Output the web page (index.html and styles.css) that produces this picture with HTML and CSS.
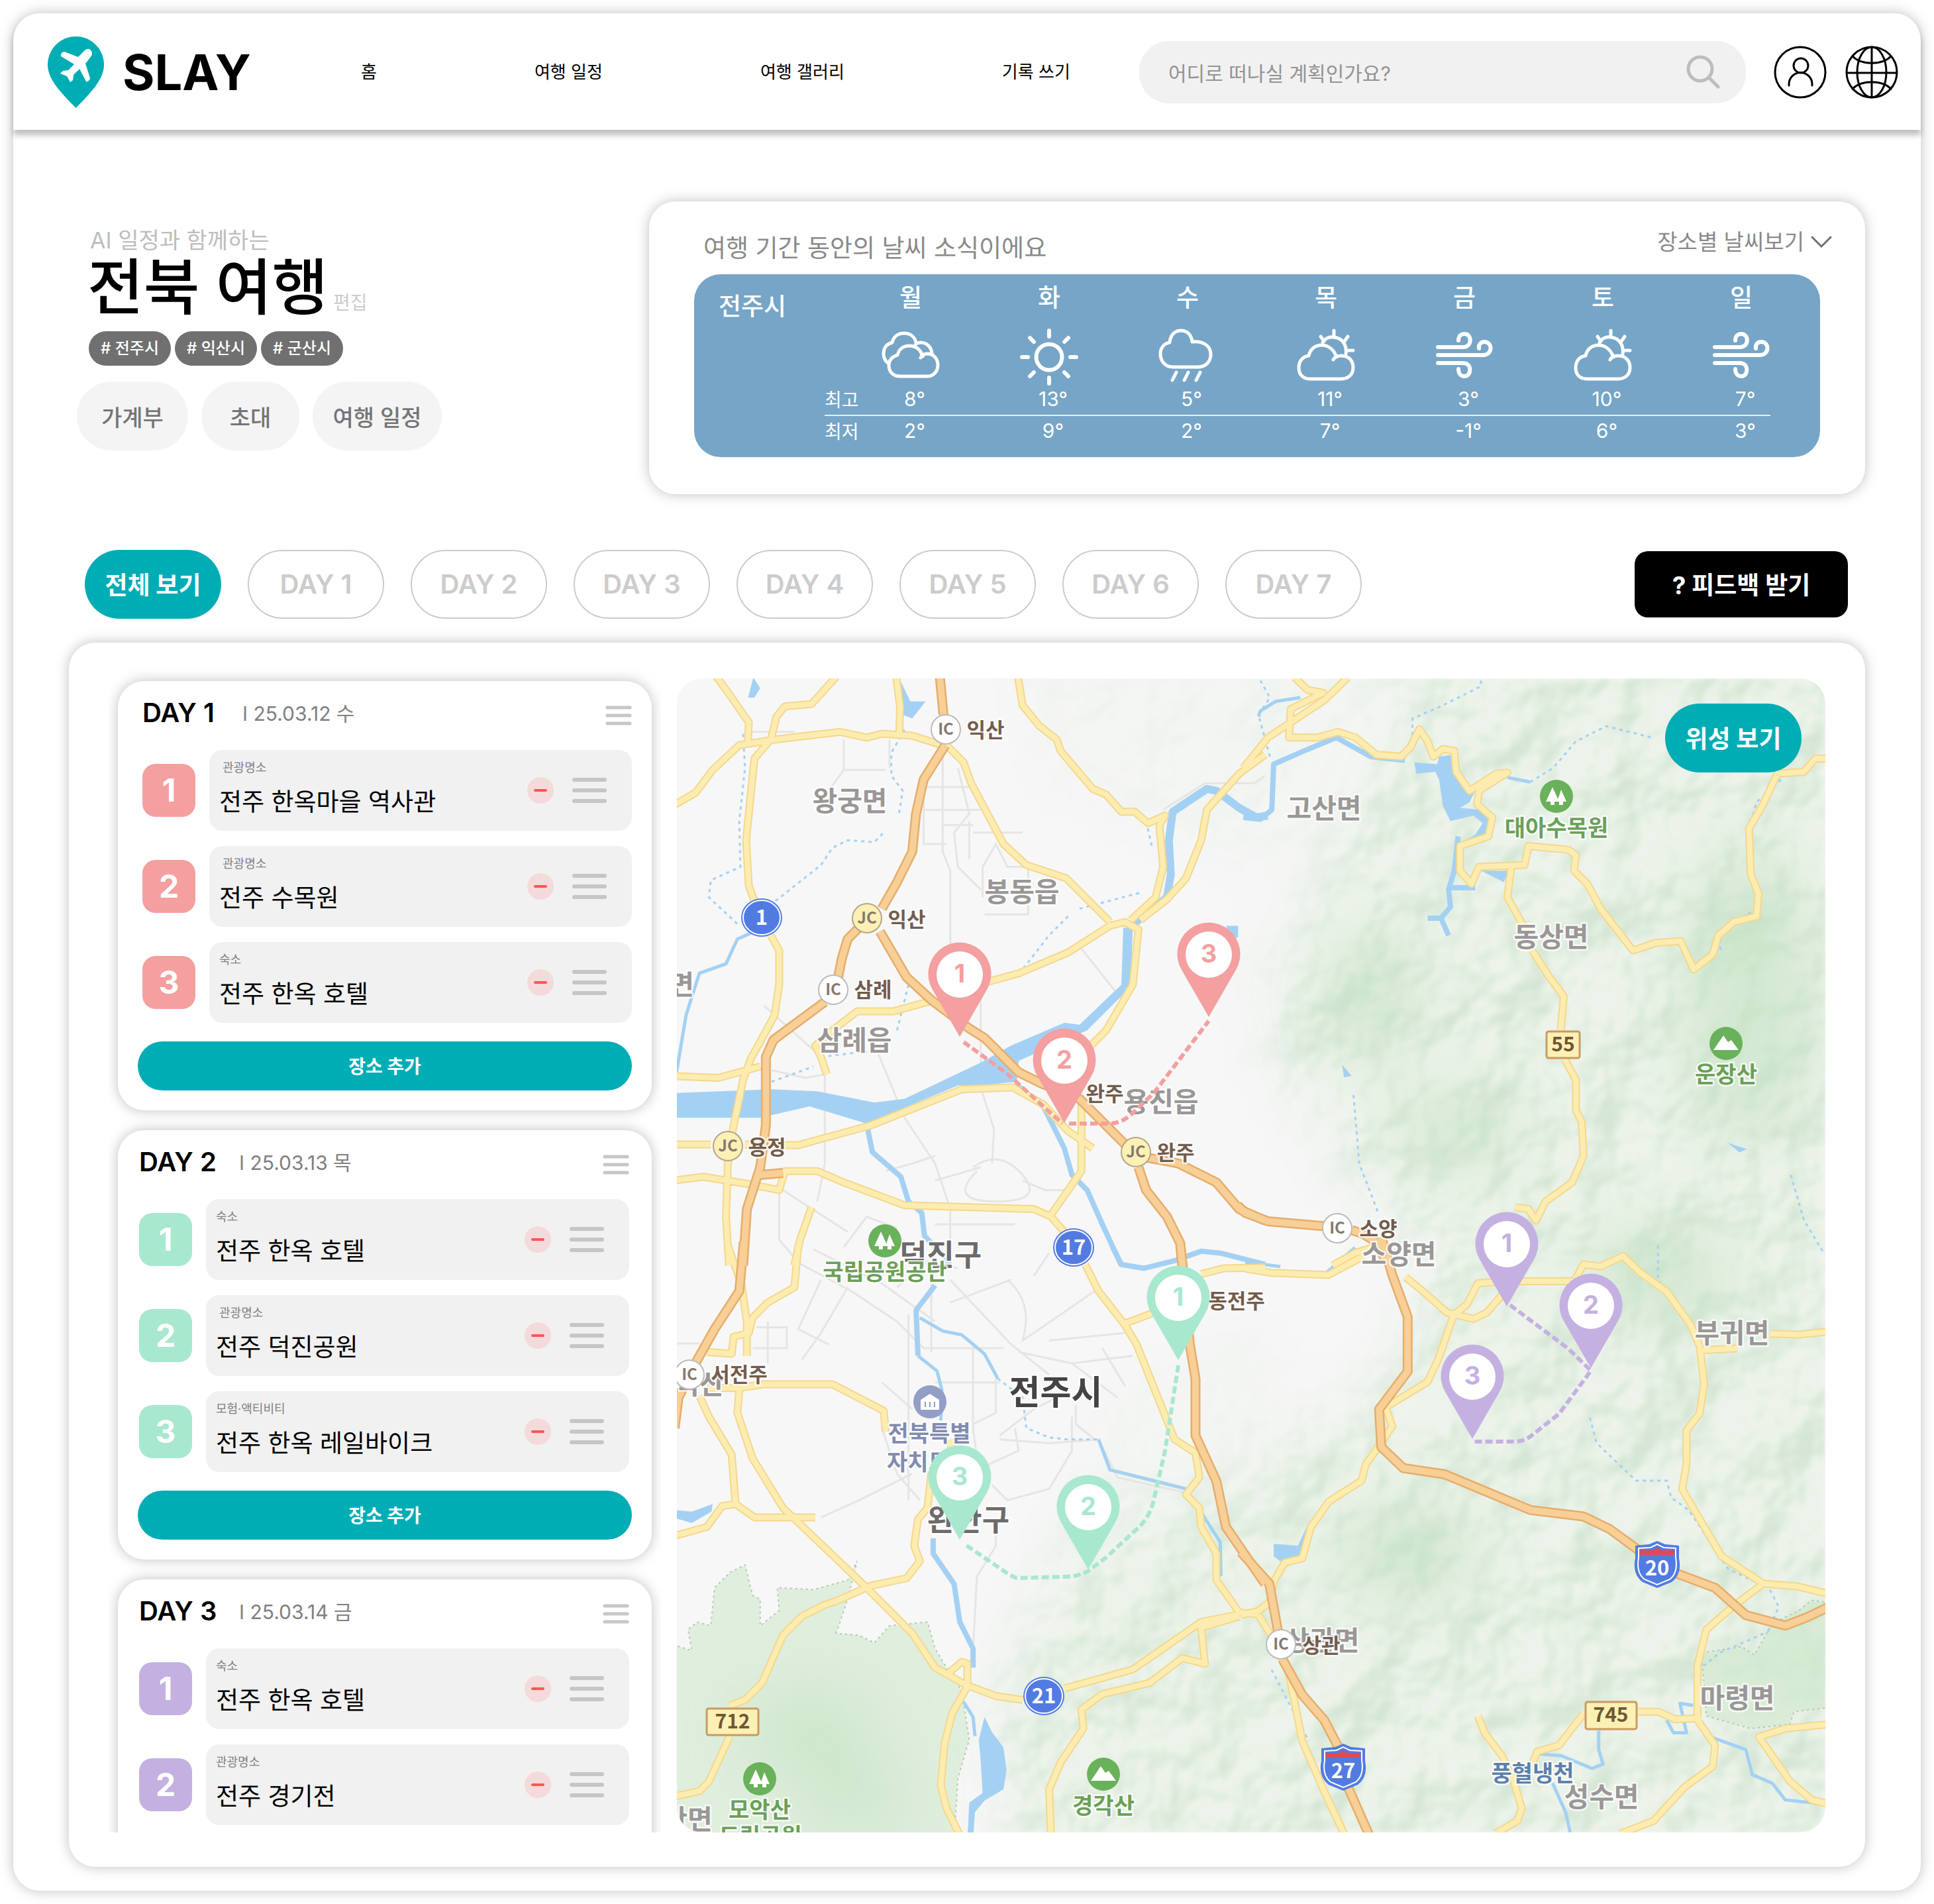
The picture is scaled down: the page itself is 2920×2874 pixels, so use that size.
FILE: index.html
```html
<!DOCTYPE html>
<html lang="ko">
<head>
<meta charset="utf-8">
<meta name="viewport" content="width=device-width, initial-scale=1">
<title>SLAY - 전북 여행</title>
<link rel="stylesheet" href="styles.css">
</head>
<body>
<svg class="sprite" aria-hidden="true">
  <symbol id="i-menu" viewBox="0 0 52 40"><path d="M3 4h46M3 20h46M3 36h46" fill="none" stroke="#c6c6c6" stroke-width="6" stroke-linecap="round"/></symbol>
  <symbol id="i-menu-s" viewBox="0 0 40 32"><path d="M3 4h34M3 16h34M3 28h34" fill="none" stroke="#c6c6c6" stroke-width="5" stroke-linecap="round"/></symbol>
  <symbol id="i-minus" viewBox="0 0 40 40"><circle cx="20" cy="20" r="20" fill="#f4dadb"/><path d="M12 20h16" stroke="#ff5454" stroke-width="4" stroke-linecap="round"/></symbol>
  <symbol id="w-clouds" viewBox="0 0 88 88"><g class="w"><path d="M59 46c2-4 6-6 10-6c10 0 16 8 16 17c0 10-7 17-16 17H28C17 74 11 67 11 57c0-7 5-13 13-15c2-9 9-14 18-14c10 0 17 6 20 16"/><path d="M11 55C5 51 3 46 3 40c0-9 5-15 13-17C18 14 25 9 34 9c9 0 16 5 18 14"/><path d="M50 28c2-4 5-5 9-5c10 0 17 8 17 18"/></g></symbol>
  <symbol id="w-sun" viewBox="0 0 88 88"><g class="w w-bold"><circle cx="44" cy="45" r="19.500"/><path d="M44 5v9M44 76v9M3 45h9M76 45h9M15 16l6 6M67 68l6 6M73 16l-6 6M21 68l-6 6"/></g></symbol>
  <symbol id="w-rain" viewBox="0 0 88 88"><g class="w"><path d="M22 60C10 60 3 51 3 40c0-9 6-16 14-17C18 11 25 5 34 5s16 6 17 17c15-2 28 5 28 19c0 11-8 19-19 19Z"/><path d="M27 68l-6 12M45 68l-6 12M63 68l-6 12"/></g></symbol>
  <symbol id="w-partly" viewBox="0 0 88 88"><g class="w"><path d="M55 49c2-4 7-6 12-6c12 0 18 8 18 18c0 10-7 17-18 17H20C8 78 3 70 3 61c0-10 6-17 15-18c2-10 10-16 19-16c11 0 19 7 23 18"/><path d="M39 23c4-7 11-9 17-8c12 1 20 11 18 26"/><path d="M56 5v8M36 14l5 7M77 14l-5 7M78 35h7"/></g></symbol>
  <symbol id="w-wind" viewBox="0 0 88 88"><g class="w w-bold"><path d="M4 30h38c14 0 14-20 2-20c-6 0-9 4-9 10"/><path d="M4 42h68c15 0 15-20 2-20c-6 0-9 5-8 10"/><path d="M4 54h38c14 0 13 20 2 20c-6 0-9-5-9-11"/></g></symbol>
</svg>

<div class="page">
  <header class="topbar">
    <a class="brand" href="#">
      <svg class="brand-pin" viewBox="0 0 85 108" aria-hidden="true"><path fill="#00adb5" d="M42.500 0C66 0 85 19 85 43c0 21-19 41-42.500 65C19 84 0 64 0 43C0 19 19 0 42.500 0Z"/><path fill="#fff" d="M65 21c3 3 3 7-1 11l-7 9l7 22c0 3-4 6-6 5L48 49l-9 9l-1 8l-4 3l-5-9l-10-4l4-4l8-1l9-9l-20-12c-1-3 2-7 5-7l21 8l10-10c4-3 7-3 9 0Z"/></svg>
      <span>SLAY</span>
    </a>
    <nav class="nav">
      <a href="#">홈</a>
      <a href="#">여행 일정</a>
      <a href="#">여행 갤러리</a>
      <a href="#">기록 쓰기</a>
    </nav>
    <form class="search">
      <input type="search" aria-label="여행지 검색" placeholder="어디로 떠나실 계획인가요?">
      <button type="button" aria-label="검색"><svg viewBox="0 0 52 52"><circle cx="21" cy="21" r="18" fill="none" stroke="#bdbdbd" stroke-width="5"/><path d="M34 34l14 14" stroke="#bdbdbd" stroke-width="5" stroke-linecap="round"/></svg></button>
    </form>
    <div class="tools">
      <button type="button" aria-label="내 정보"><svg viewBox="0 0 80 80" fill="none" stroke="#000" stroke-width="3"><circle cx="40" cy="40" r="38"/><circle cx="41" cy="30" r="11"/><path d="M23 60v-2a17.500 17.500 0 0 1 35 0v2" stroke-linecap="round"/></svg></button>
      <button type="button" aria-label="언어"><svg viewBox="0 0 80 80" fill="none" stroke="#000" stroke-width="3"><circle cx="40" cy="40" r="38"/><ellipse cx="40" cy="40" rx="22" ry="38"/><path d="M40 2v76M2 41h76M10 15c14 15 46 15 60 0M10 66c14-15 46-15 60 0"/></svg></button>
    </div>
  </header>

  <main class="main">
    <section class="hero">
      <div class="trip">
        <p class="trip-tag">AI 일정과 함께하는</p>
        <div class="trip-title"><h1>전북 여행</h1><button type="button">편집</button></div>
        <ul class="chips"><li># 전주시</li><li># 익산시</li><li># 군산시</li></ul>
        <div class="actions"><button type="button">가계부</button><button type="button">초대</button><button type="button">여행 일정</button></div>
      </div>

      <section class="weather">
        <div class="weather-head">
          <h2>여행 기간 동안의 날씨 소식이에요</h2>
          <button type="button">장소별 날씨보기<svg viewBox="0 0 32 18" aria-hidden="true"><path d="M2 2l14 14L30 2" fill="none" stroke="#707070" stroke-width="3" stroke-linecap="round"/></svg></button>
        </div>
        <div class="forecast">
          <h3>전주시</h3>
          <table>
            <colgroup><col class="c-label"><col span="6"><col class="c-last"></colgroup>
            <thead>
              <tr class="r-day"><td></td><th><span>월</span></th><th><span>화</span></th><th><span>수</span></th><th><span>목</span></th><th><span>금</span></th><th><span>토</span></th><th><span>일</span></th></tr>
            </thead>
            <tbody>
              <tr class="r-icon"><td></td>
                <td><svg role="img" aria-label="흐림"><use href="#w-clouds"/></svg></td>
                <td><svg role="img" aria-label="맑음"><use href="#w-sun"/></svg></td>
                <td><svg role="img" aria-label="비"><use href="#w-rain"/></svg></td>
                <td><svg role="img" aria-label="구름 조금"><use href="#w-partly"/></svg></td>
                <td><svg role="img" aria-label="바람"><use href="#w-wind"/></svg></td>
                <td><svg role="img" aria-label="구름 조금"><use href="#w-partly"/></svg></td>
                <td><svg role="img" aria-label="바람"><use href="#w-wind"/></svg></td></tr>
              <tr class="r-high"><th>최고</th><td><span>8°</span></td><td><span>13°</span></td><td><span>5°</span></td><td><span>11°</span></td><td><span>3°</span></td><td><span>10°</span></td><td><span>7°</span></td></tr>
              <tr class="r-low"><th>최저</th><td><span>2°</span></td><td><span>9°</span></td><td><span>2°</span></td><td><span>7°</span></td><td><span>-1°</span></td><td><span>6°</span></td><td><span>3°</span></td></tr>
            </tbody>
          </table>
        </div>
      </section>
    </section>

    <div class="tabs">
      <button type="button" class="pill on">전체 보기</button>
      <button type="button" class="pill">DAY 1</button>
      <button type="button" class="pill">DAY 2</button>
      <button type="button" class="pill">DAY 3</button>
      <button type="button" class="pill">DAY 4</button>
      <button type="button" class="pill">DAY 5</button>
      <button type="button" class="pill">DAY 6</button>
      <button type="button" class="pill">DAY 7</button>
      <button type="button" class="feedback">? 피드백 받기</button>
    </div>

    <section class="board">
      <div class="days">
        <article class="day day-open pink">
          <header><h2>DAY 1</h2><p>I 25.03.12 수</p><button type="button" aria-label="DAY 1 순서"><svg><use href="#i-menu-s"/></svg></button></header>
          <ol>
            <li><b>1</b><div class="place"><div><small>&nbsp;관광명소</small><h3>전주 한옥마을 역사관</h3></div><button type="button" class="del" aria-label="삭제"><svg><use href="#i-minus"/></svg></button><button type="button" class="drag" aria-label="이동"><svg><use href="#i-menu"/></svg></button></div></li>
            <li><b>2</b><div class="place"><div><small>&nbsp;관광명소</small><h3>전주 수목원</h3></div><button type="button" class="del" aria-label="삭제"><svg><use href="#i-minus"/></svg></button><button type="button" class="drag" aria-label="이동"><svg><use href="#i-menu"/></svg></button></div></li>
            <li><b>3</b><div class="place"><div><small>숙소</small><h3>전주 한옥 호텔</h3></div><button type="button" class="del" aria-label="삭제"><svg><use href="#i-minus"/></svg></button><button type="button" class="drag" aria-label="이동"><svg><use href="#i-menu"/></svg></button></div></li>
          </ol>
          <button type="button" class="add">장소 추가</button>
        </article>

        <article class="day mint">
          <header><h2>DAY 2</h2><p>I 25.03.13 목</p><button type="button" aria-label="DAY 2 순서"><svg><use href="#i-menu-s"/></svg></button></header>
          <ol>
            <li><b>1</b><div class="place"><div><small>숙소</small><h3>전주 한옥 호텔</h3></div><button type="button" class="del" aria-label="삭제"><svg><use href="#i-minus"/></svg></button><button type="button" class="drag" aria-label="이동"><svg><use href="#i-menu"/></svg></button></div></li>
            <li><b>2</b><div class="place"><div><small>&nbsp;관광명소</small><h3>전주 덕진공원</h3></div><button type="button" class="del" aria-label="삭제"><svg><use href="#i-minus"/></svg></button><button type="button" class="drag" aria-label="이동"><svg><use href="#i-menu"/></svg></button></div></li>
            <li><b>3</b><div class="place"><div><small>모험·액티비티</small><h3>전주 한옥 레일바이크</h3></div><button type="button" class="del" aria-label="삭제"><svg><use href="#i-minus"/></svg></button><button type="button" class="drag" aria-label="이동"><svg><use href="#i-menu"/></svg></button></div></li>
          </ol>
          <button type="button" class="add">장소 추가</button>
        </article>

        <article class="day lilac">
          <header><h2>DAY 3</h2><p>I 25.03.14 금</p><button type="button" aria-label="DAY 3 순서"><svg><use href="#i-menu-s"/></svg></button></header>
          <ol>
            <li><b>1</b><div class="place"><div><small>숙소</small><h3>전주 한옥 호텔</h3></div><button type="button" class="del" aria-label="삭제"><svg><use href="#i-minus"/></svg></button><button type="button" class="drag" aria-label="이동"><svg><use href="#i-menu"/></svg></button></div></li>
            <li><b>2</b><div class="place"><div><small>관광명소</small><h3>전주 경기전</h3></div><button type="button" class="del" aria-label="삭제"><svg><use href="#i-minus"/></svg></button><button type="button" class="drag" aria-label="이동"><svg><use href="#i-menu"/></svg></button></div></li>
          </ol>
        </article>
      </div>

      <div class="map">
        <svg viewBox="0 0 1734 1742" preserveAspectRatio="xMidYMid slice" role="img" aria-label="전주시 주변 지도">
          <defs>
            <filter id="soft" x="-20%" y="-20%" width="140%" height="140%"><feGaussianBlur stdDeviation="45"/></filter>
            <filter id="relief" x="0" y="0" width="100%" height="100%" color-interpolation-filters="sRGB">
              <feTurbulence type="fractalNoise" baseFrequency="0.008" numOctaves="4" seed="7"/>
              <feDiffuseLighting surfaceScale="34" diffuseConstant="1.100" lighting-color="#fff"><feDistantLight azimuth="225" elevation="58"/></feDiffuseLighting>
              <feGaussianBlur stdDeviation="3"/>
              <feComponentTransfer><feFuncR type="table" tableValues=".82 .83 .84 .86 .89 .93"/><feFuncG type="table" tableValues=".89 .9 .905 .92 .935 .955"/><feFuncB type="table" tableValues=".82 .83 .84 .86 .885 .92"/></feComponentTransfer>
            </filter>
            <mask id="hills">
              <g filter="url(#soft)">
                <path fill="#fff" d="M1120-120L1900-120V1850H520L470 1560L560 1380L640 1230L820 1180L1000 1120L1110 1010L1130 880L980 700L900 560L880 430L1010 300Z"/>
                <path fill="#444" d="M520-60H1160L1000 320L760 240L560 150ZM640 1100L900 980L900 1240L640 1300Z"/>
              </g>
            </mask>
            <g id="yellow">
              <g transform="translate(-12 -14) scale(.574)"><path d="M125 20L165 75 210 140 208 190M440 20L375 92 305 98 283 125 268 185 225 235 215 330 203 450 210 570 225 610M268 700L290 740 290 830 278 910 240 980 215 1025 195 1080 165 1225 155 1300 150 1440 158 1568M10 360L70 325 115 265 185 200 280 185 450 165 520 180 560 170 640 175 735 205 775 245 795 300 880 460 940 515 1045 550 1160 665M598 20L608 100 606 170M918 20L930 95 975 150 1020 185 1030 215 1115 315 1150 330 1190 375 1225 375 1260 405 1305 385 1290 410 1300 520 1280 600 1215 660M840 822L920 800 1050 745 1160 675 1200 665 1235 685 1220 830 1150 950 1100 1000M1568 225L1500 275 1415 370 1400 450 1360 550 1310 605 1240 660M10 1070L130 1075 240 1045M415 1065L400 1020 385 990 430 950 495 900 590 900 700 870M10 1250H110M200 1250L340 1252 530 1200 770 1105 905 1100 985 1145 1050 1215 1115 1260M1085 1130V1320L1005 1435M10 1345L90 1335 215 1355 290 1370 305 1320 390 1320 460 1350 620 1410 960 1420 1005 1440 1040 1480M375 1415L345 1500 330 1568"/></g>
              <g transform="translate(858 -14) scale(.574)"><path d="M130 22L165 55 205 62 120 105 115 180 190 180 245 165 290 180 345 225 410 230 435 205 458 158 480 190 495 230 520 210 550 215 555 270 590 320 660 275 690 272 615 320 610 355 650 390 640 440 565 465 565 530 595 565 615 520 735 515 745 465 850 475 870 490 865 530 900 565 935 630 1020 740 1080 720 1145 715 1180 790 1230 750 1245 700 1285 665 1345 650 1350 590 1330 540 1325 420 1360 360 1400 275 1470 270 1500 235 1535 235M270 22L210 80 60 180 -5 260M700 520L690 600 740 690M755 740L800 810 838 860 830 950M840 1025L870 1080 870 1160 885 1190 890 1280 860 1350 790 1400 765 1450 745 1420 710 1415M230 1568L290 1535 340 1520"/></g>
              <g transform="translate(-12 856) scale(.574)"><path d="M155 0L190 100 205 200 205 290M340 0L330 110 260 150 220 190 210 230 170 240 165 285 100 280M80 395L105 450 165 550 175 680M185 380L180 440 220 560 300 690 520 900 640 1020 700 1110 780 1155 860 1185 930 1195M100 375L180 375 250 365 430 365 565 435 570 490M10 765L100 740 140 685 175 680 225 715 385 715M740 510L745 560 690 600 680 690 655 720 645 790 660 830 625 875 530 895 440 935 410 945 350 975 300 1025 245 1150 200 1195 160 1210M160 1290L105 1410 80 1435 10 1450M735 1125L770 1095 785 1100 785 1160 745 1230 725 1310 715 1420 730 1480 770 1560M1095 50L1130 120 1200 210 1230 260 1330 510 1385 545 1395 610 1360 655 1395 690 1400 740 1440 810 1440 880 1500 965 1550 970M1200 205L1280 175M1400 75L1460 60 1568 58M1040 1165L1220 1115 1400 990 1500 970M1500 975L1400 1005 1410 1100 1350 1085 1265 1150 1140 1180 1085 1220 1090 1270 1030 1360 1000 1430 1005 1560"/></g>
              <g transform="translate(858 856) scale(.663 .634)"><path d="M0 55L60 65 190 70 270 25M365 75L400 105 460 160 520 175 550 160 600 100M475 165L440 270 415 325 320 385 335 430 300 485 275 520 265 560 190 610 150 670 130 745 90 755 65 800 55 850 30 870 -10 880M475 165L505 140 530 90 600 85 750 85 770 45 810 50 860 25 900 65 960 110 1015 190 1035 240 1045 330 1035 400 1005 440 1005 520 995 580 1085 740 1180 805 1110 860 1050 915 1030 1000 1030 1130 1070 1190 1065 1240 1000 1290 930 1370 855 1400M1035 250L1120 245M1195 210L1260 212 1330 205M1180 805L1260 812 1330 830M895 1110L940 1110 980 1128 1040 1125M770 1115L715 1190 665 1205 655 1230M530 1120L545 1160 585 1215 610 1270 630 1340 620 1370 570 1400M1330 1140L1230 1150 1170 1170 1240 1275 1290 1320 1330 1330M30 880L60 930 100 1020 130 1180 180 1300 225 1400"/></g>
            </g>
            <g id="orange">
              <g transform="translate(-12 -14) scale(.574)"><path d="M712 15L722 120M727 200L670 290 650 380 640 480 600 560 560 630M500 680L470 710 455 760 445 810M410 875L275 975 255 1020 255 1200 240 1310 205 1420 195 1568M240 1330L300 1325M555 690L625 810 690 870 790 945 830 970 920 1060 980 1090 1080 1130 1200 1250M1260 1285L1340 1300 1440 1350 1500 1420 1568 1450M1235 1310L1255 1370 1310 1440 1345 1510 1350 1568"/></g>
              <g transform="translate(858 -14) scale(.574)"><path d="M-20 1410L0 1430 60 1452 210 1465M280 1475L310 1485 350 1510 370 1560"/></g>
              <g transform="translate(-12 856) scale(.574)"><path d="M197 -10L185 120 120 220 75 300 25 400 15 480M1345 0L1352 60 1370 260 1385 350 1385 500 1440 620 1465 740 1568 890"/></g>
              <g transform="translate(858 856) scale(.663 .634)"><path d="M310 -20L335 70 370 170 370 300 305 390 310 480 360 530 455 545 650 630 770 645 830 675 895 725M980 780L1070 815 1140 880 1230 905 1280 885 1330 860M-10 730L55 805 75 920M85 985L130 1070 180 1130 220 1210M230 1280L285 1410"/></g>
            </g>
            <g id="pin"><path d="M0 0L-41-71A47.500 47.500 0 1 1 41-71Z"/><circle cy="-94" r="35" fill="#fff"/></g>
            <g id="trees"><circle r="25" fill="#69b15a"/><path d="M-6-14L4 8H-3V13H-9V8H-16ZM7-10L15 8H10V13H4V8H1Z" fill="#fff"/></g>
            <g id="peak"><circle r="25" fill="#69b15a"/><path d="M-19 10L-4-12 3-2 8-5 19 10Z" fill="#fff"/></g>
            <g id="ic"><circle r="22" fill="#fff" stroke="#bbb" stroke-width="2"/></g>
            <g id="jc"><circle r="22" fill="#fdf0b4" stroke="#b4a68a" stroke-width="2"/></g>
            <g id="route"><ellipse rx="31" ry="29" fill="#527be2"/><ellipse rx="28" ry="26" fill="none" stroke="#fff" stroke-width="2"/></g>
            <g id="shield"><path d="M-33-29L-12-31 0-36 12-31 33-29V-10Q38 14 22 26L0 35-22 26Q-38 14-33-10Z" fill="#527be2"/><path d="M-28-25L-10-26 0-31 10-26 28-25V-11Q32 12 19 22L0 30-19 22Q-32 12-28-11Z" fill="none" stroke="#fff" stroke-width="2"/><path d="M-26-22H-6L0-26 6-22H26V-15H-26Z" fill="#e04a50"/></g>
          </defs>

          <rect width="1734" height="1742" fill="#f7f7f7"/>
          <g mask="url(#hills)"><rect width="1734" height="1742" filter="url(#relief)"/></g>
          <g fill="#d3ead0" fill-opacity=".65" stroke="#b4c6b4" stroke-width="2" stroke-dasharray="3 5">
            <path transform="translate(-12 856) scale(.574)" d="M10 1050L60 1065 50 1010 75 990 110 1000 120 900 160 860 200 840 220 920 240 930 240 1000 290 960 285 900 380 905 470 880 495 830 470 930 440 1020 500 1025 540 1045 580 1000 680 990 700 1060 730 1110 770 1170 790 1300 760 1400 750 1560H10Z"/>
            <path transform="translate(858 856) scale(.663 .634)" d="M1040 970L1130 955 1160 975 1200 900 1260 870 1290 845 1330 850V1100L1250 1110 1240 1140 1150 1150 1050 1120Z"/>
          </g>
          <g class="woods" filter="url(#soft)">
            <ellipse cx="200" cy="1590" rx="100" ry="60"/><ellipse cx="270" cy="1690" rx="80" ry="50"/><ellipse cx="1690" cy="1480" rx="50" ry="40"/>
            <ellipse cx="1050" cy="480" rx="60" ry="110"/><ellipse cx="1180" cy="680" rx="90" ry="60"/><ellipse cx="1620" cy="480" rx="100" ry="220"/><ellipse cx="1480" cy="900" rx="120" ry="70"/><ellipse cx="1100" cy="1320" rx="110" ry="70"/>
          </g>

          <g class="lanes">
            <g transform="translate(-12 -14) scale(.574)"><path d="M460 185V265L420 320M460 265H570M580 185V260M215 165H330M670 300V460H730M720 220V480L740 530V720L820 790V1090M760 260L790 380 750 430 760 520 820 580M670 310H800M670 370H820M720 410H800M825 600V520L860 460 890 520H945V645H830M800 430H930M790 400V500M250 885L400 1020M410 1060V1300L390 1400M550 1010L620 1180 700 1300 740 1420V1568M820 1100L855 1210 850 1300M270 1055L360 1075 415 1065M1085 735L1200 880M800 1310Q870 1260 930 1330T860 1400 810 1320M700 1345L820 1310M930 1345L990 1370H1040M290 1380V1500L340 1560M300 1370L470 1480M700 1460H910M1300 370L1410 300H1540L1568 280M570 1320L640 1300 700 1280M460 1520L520 1440 600 1470"/></g>
            <g transform="translate(-12 856) scale(.574)"><path d="M20 258H80M230 215H310V270H220M260 200V310M470 110L400 230 350 300M400 90L340 220 420 260M330 40L480 120 600 200 670 270H880M380 10L560 100 700 200M630 180V670M800 270V480L810 560 760 640M690 60V280M860 350V440L800 470M740 90L900 260 1000 340M890 90Q960 150 930 250L1120 120M920 280L1060 310 1220 290M1060 310L1180 400M1020 400L960 430 870 500M810 590L920 540 910 480M700 360H870M560 360L640 430M560 480L600 600 660 670M400 715L500 670 640 600M850 630L890 670 1000 640 1060 540V450M870 510L1000 520 1130 510L1180 610 1360 650M860 730V790L810 870 800 1060M960 80L1000 20M1070 420V470L1120 510M1140 270L1200 370M1000 250L1200 230M740 150L900 90M600 110L680 40 760 60"/></g>
          </g>

          <g class="streams">
            <g transform="translate(-12 -14) scale(.574)"><path d="M195 170L200 260 185 400 188 520 110 555 105 600 180 670M280 610L400 515 430 470 470 450 540 455 570 425M620 160L585 220 585 280 615 320 605 380M1050 650L1000 700 930 790M1080 630L1240 588M630 830L600 950M270 1085L380 1045M400 1020L520 1005M1255 400L1270 465"/></g>
            <g transform="translate(858 -14) scale(.574)"><path d="M750 297L810 260 870 190 950 150 1070 180M620 30V45L510 100 440 130V200M285 1120L300 1300 350 1430M1410 290L1345 350 1320 440M1435 1330L1470 1450 1525 1540M40 30L65 75 35 120 65 230M1330 640L1250 690V740"/></g>
            <g transform="translate(-12 856) scale(.574)"><path d="M865 350L930 400 940 480 1000 505 1050 510 1130 510"/></g>
            <g transform="translate(858 856) scale(.663 .634)"><path d="M1195 820L1215 860 1190 920 1080 970 1045 1000M785 410L800 470 890 560 960 560 970 600 1010 630 1100 770 1160 800M940 0V80L1000 170M60 1010L100 1090 145 1180"/></g>
          </g>
          <g class="river">
            <g transform="translate(-12 -14) scale(.574)"><path class="wide" d="M1210 680L1310 600 1320 540 1315 450 1325 375 1415 315 1440 320 1500 365 1545 390 1575 385"/><path d="M520 1195L535 1270 610 1335 630 1400 665 1430 672 1490 720 1540 740 1568M910 1090L985 1150 1040 1260 1060 1330 1100 1370 1140 1460 1190 1568"/><path class="thin" d="M20 1060L45 910 80 800 150 775 180 710 225 690"/><path class="fill" d="M10 1115L270 1105 390 1110 540 1140 620 1130 820 1035 900 990 1040 930 1080 935 1190 830 1195 680 1220 680 1215 835 1100 950 920 1030 915 1085 820 1095 760 1095 520 1195 470 1180 370 1150 240 1180 10 1180ZM605 22L635 85 675 85 640 130 615 120ZM222 22L240 50 225 75 208 75ZM1465 675H1497V705L1480 710Z"/></g>
            <g transform="translate(858 -14) scale(.574)"><path d="M-5 390L40 395 70 370 75 250 155 215 240 180 330 230 420 240M560 440L550 530 535 580 540 625 515 655 535 700M540 575H605M515 655H480"/><path class="thin" d="M35 125L40 110 80 85 145 75M690 285L750 297"/><path class="fill" d="M510 230L545 225 560 280 605 320 590 350 565 365 625 370 645 395 635 430 560 465 605 435 625 405 600 385 540 400 520 360 510 290 500 270 450 275 445 245 505 250ZM620 530L695 530 680 560ZM255 1040L280 1070 260 1073ZM1270 1246L1320 1262 1300 1271Z"/></g>
            <g transform="translate(-12 856) scale(.574)"><path d="M700 105L650 170 655 290M1165 0L1190 50 1250 60 1330 40 1400 15 1450 20 1568 50M695 770V810L750 890 765 990 800 1060V1110"/><path class="thin" d="M655 290L705 330 718 380 715 460M660 190L720 225 770 235 830 285 865 350M1130 510L1160 590 1220 605 1360 640 1450 780 1452 870M775 1200L800 1240 805 1290"/><path class="fill" d="M830 1240L850 1280 880 1320 888 1380 880 1430 830 1460 805 1490 800 1560H785L790 1465 825 1440 820 1355 815 1300ZM10 695L60 700 115 680 112 700 60 730 10 715Z"/></g>
            <g transform="translate(858 856) scale(.663 .634)"><path class="thin" d="M0 40L80 50M185 65L250 5M665 1210L720 1215 790 1245 815 1235 805 1200 805 1155M700 1280L730 1350 740 1397M1060 1170L1140 1200 1155 1260 1200 1280 1230 1320 1321 1330M960 1130L975 1160 1005 1160 990 1090 1020 1095"/><path class="fill" d="M65 710L120 715 140 670 130 735 85 755 65 740Z"/></g>
          </g>

          <use href="#yellow" class="road y-edge"/><use href="#yellow" class="road y-core"/>
          <use href="#orange" class="road o-edge"/><use href="#orange" class="road o-core"/>

          <g class="t-area">
            <text x="261" y="200">왕궁면</text><text x="521" y="337">봉동읍</text><text x="268" y="561">삼례읍</text><text x="7" y="477">면</text>
            <text x="731" y="654">용진읍</text><text x="977" y="211">고산면</text><text x="1320" y="405">동상면</text><text x="1090" y="884">소양면</text>
            <text x="1593" y="1003">부귀면</text><text x="974" y="1467">상관면</text><text x="1601" y="1554">마령면</text><text x="1396" y="1703">성수면</text>
            <text x="34" y="1080">익산</text><text x="16" y="1737">난면</text>
          </g>
          <g class="t-area t-gu"><text x="398" y="887">덕진구</text><text x="440" y="1287">완산구</text></g>
          <text class="t-city" x="572" y="1096">전주시</text>
          <g class="t-green">
            <text x="314" y="908">국립공원공단</text><text x="1328" y="238">대아수목원</text><text x="1584" y="610">운장산</text><text x="125" y="1720">모악산</text><text x="126" y="1760">도립공원</text><text x="644" y="1714">경각산</text>
          </g>
          <g class="t-green t-slate"><text x="381" y="1152">전북특별</text><text x="364" y="1195">자치도</text></g>
          <text class="t-green t-blue" x="1292" y="1665">풍혈냉천</text>
          <use href="#trees" x="314" y="849"/><use href="#trees" x="1328" y="178"/><use href="#trees" x="125" y="1661"/>
          <use href="#peak" x="1584" y="551"/><use href="#peak" x="644" y="1654"/>
          <g transform="translate(382 1092)"><circle r="25" fill="#929ec6"/><path d="M-14-3L0-12 14-3V12H-14Z" fill="#fff"/><path d="M-7 0V8M0 0V8M7 0V8" stroke="#929ec6" stroke-width="2"/></g>

          <use href="#ic" x="406" y="77"/><use href="#ic" x="236" y="470"/><use href="#ic" x="997" y="830"/><use href="#ic" x="19" y="1051"/><use href="#ic" x="912" y="1458"/>
          <use href="#jc" x="287" y="362"/><use href="#jc" x="693" y="715"/><use href="#jc" x="77" y="706"/>
          <g class="t-ic"><text x="406" y="85">IC</text><text x="236" y="478">IC</text><text x="997" y="838">IC</text><text x="19" y="1059">IC</text><text x="912" y="1466">IC</text><text x="287" y="370">JC</text><text x="693" y="723">JC</text><text x="77" y="714">JC</text></g>
          <g class="t-jct">
            <text x="466" y="89">익산</text><text x="347" y="375">익산</text><text x="296" y="481">삼례</text><text x="646" y="638">완주</text><text x="753" y="727">완주</text><text x="136" y="719">용정</text><text x="1059" y="842">소양</text><text x="94" y="1062">서전주</text><text x="845" y="951">동전주</text><text x="973" y="1471">상관</text>
          </g>
          <use href="#route" x="128" y="361"/><use href="#route" x="599" y="859"/><use href="#route" x="554" y="1536"/>
          <use href="#shield" x="1480" y="1338"/><use href="#shield" x="1006" y="1644"/>
          <g class="t-route"><text x="128" y="372">1</text><text x="599" y="870">17</text><text x="554" y="1547">21</text><text x="1480" y="1354">20</text><text x="1006" y="1660">27</text></g>
          <g fill="#fdf0b4" stroke="#c99a62" stroke-width="3"><rect x="1313" y="533" width="50" height="40" rx="3"/><rect x="45" y="1555" width="78" height="40" rx="3"/><rect x="1372" y="1545" width="77" height="41" rx="3"/></g>
          <g class="t-local"><text x="1338" y="563">55</text><text x="84" y="1585">712</text><text x="1410" y="1575">745</text></g>

          <g class="trail">
            <path stroke="#f49fa0" d="M433 549L499 597 582 672M592 672H654Q672 671 686 658L720 626 803 517"/>
            <path stroke="#a8e8cf" d="M757 1037L737 1166 720 1240Q714 1268 690 1288L648 1327 620 1348Q605 1356 585 1356L513 1358 502 1353 436 1308"/>
            <path stroke="#c4b1e1" d="M1258 946L1345 1011 1380 1045 1332 1110 1289 1144Q1278 1152 1264 1152H1203"/>
          </g>
          <g fill="#f49fa0"><use href="#pin" x="427" y="541"/><use href="#pin" x="585" y="671"/><use href="#pin" x="803" y="511"/></g>
          <g fill="#a8e8cf"><use href="#pin" x="757" y="1029"/><use href="#pin" x="621" y="1345"/><use href="#pin" x="427" y="1300"/></g>
          <g fill="#c4b1e1"><use href="#pin" x="1253" y="948"/><use href="#pin" x="1380" y="1041"/><use href="#pin" x="1201" y="1148"/></g>
          <g class="t-pin" fill="#f49fa0"><text x="427" y="459">1</text><text x="585" y="589">2</text><text x="803" y="429">3</text></g>
          <g class="t-pin" fill="#a8e8cf"><text x="757" y="947">1</text><text x="621" y="1263">2</text><text x="427" y="1218">3</text></g>
          <g class="t-pin" fill="#c4b1e1"><text x="1253" y="866">1</text><text x="1380" y="959">2</text><text x="1201" y="1066">3</text></g>
        </svg>
        <button type="button" class="pill on map-mode">위성 보기</button>
      </div>
    </section>
  </main>
</div>
</body>
</html>
```
FILE: styles.css
```css
* { box-sizing: border-box; }
body { margin: 0; padding: 20px; background: #fff; color: #000; font-family: Inter, "Noto Sans CJK KR", sans-serif; font-size: 28px; }
h1, h2, h3, p, ul, ol { margin: 0; padding: 0; font-weight: 400; }
ul, ol { list-style: none; }
button { margin: 0; padding: 0; border: 0; background: none; color: inherit; font: inherit; white-space: nowrap; cursor: pointer; }
svg { display: block; }
a { color: inherit; text-decoration: none; }
.sprite { position: absolute; width: 0; height: 0; }

.page { border-radius: 40px; background: #fff; box-shadow: 0 0 20px rgba(0, 0, 0, .25); }

.topbar { display: flex; align-items: center; height: 176px; padding: 2px 34px 0 52px; border-radius: 40px 40px 0 0; box-shadow: 0 8px 8px rgba(0, 0, 0, .25); }
.brand { display: flex; align-items: center; gap: 28px; width: 473px; font-size: 74px; font-weight: 700; }
.brand-pin { width: 85px; height: 108px; }
.nav { display: flex; flex: 1; gap: 238px; font-size: 26px; line-height: 36px; white-space: nowrap; }
.search { display: flex; align-items: center; width: 916px; height: 94px; padding: 0 38px 0 44px; border-radius: 45px; background: #f1f1f1; }
.search input { flex: 1; min-width: 0; padding: 4px 0 0; border: 0; outline: 0; background: none; font: inherit; font-size: 30px; }
.search input::placeholder { color: #939393; opacity: 1; }
.search svg { width: 52px; height: 52px; }
.tools { display: flex; gap: 28px; margin-left: 42px; }
.tools svg { width: 80px; height: 80px; }

.main { padding: 108px 84px 36px; }
.hero { display: grid; grid-template-columns: 876fr 1836fr; }
.trip { padding: 38px 0 0 12px; }
.trip-tag { padding-left: 20px; color: #bdbdbd; font-size: 34px; line-height: 42px; }
.trip-title { display: flex; align-items: baseline; gap: 8px; height: 100px; padding-left: 16px; line-height: 100px; }
.trip-title h1 { font-size: 92px; font-weight: 500; }
.trip-title button { color: #ccc; }
.chips { display: flex; gap: 6px; margin-top: 16px; padding-left: 18px; }
.chips li { width: 124px; border-radius: 26px; background: #707070; color: #fff; font-size: 24px; font-weight: 500; line-height: 52px; text-align: center; }
.actions { display: flex; gap: 20px; margin-top: 24px; }
.actions button { height: 104px; padding: 0 37px; border-radius: 52px; background: #f4f4f4; color: #757575; font-size: 34px; font-weight: 500; }
.actions button:nth-child(2) { padding: 0 43px; }
.actions button:nth-child(3) { padding: 0 30px; }

.weather { padding-bottom: 56px; border-radius: 40px; background: #fff; box-shadow: 0 0 20px rgba(0, 0, 0, .25); }
.weather-head { display: flex; align-items: flex-start; justify-content: space-between; padding: 38px 50px 6px 82px; color: #8a8a8a; }
.weather-head h2 { font-size: 37px; line-height: 66px; }
.weather-head button { display: flex; align-items: center; gap: 10px; font-size: 33px; line-height: 46px; }
.weather-head svg { width: 32px; height: 18px; }
.forecast { display: flex; height: 276px; margin: 0 68px; padding: 12px 75px 0 37px; border-radius: 40px; background: #76a5c7; color: #fff; }
.forecast h3 { width: 160px; font-size: 37px; font-weight: 500; line-height: 74px; }
.forecast table { flex: 1; height: 250px; border-collapse: collapse; table-layout: fixed; }
.forecast th, .forecast td { padding: 0; font-weight: 400; text-align: left; white-space: nowrap; }
.forecast span { display: block; width: 88px; text-align: center; }
.forecast svg { width: 88px; height: 88px; }
.c-label { width: 86px; }
.c-last { width: 88px; }
.r-day { height: 48px; font-size: 37px; line-height: 48px; }
.r-day th { font-weight: 500; }
.r-icon { height: 108px; vertical-align: bottom; }
.r-high { height: 45px; border-bottom: 2px solid #e6eff5; }
.r-low { height: 49px; }
.forecast .r-high th, .forecast .r-high td, .forecast .r-low th, .forecast .r-low td { padding-bottom: 4px; }
.r-high span, .r-low span { padding-left: 12px; font-size: 30px; }
.w { fill: none; stroke: #fff; stroke-width: 5; stroke-linecap: round; stroke-linejoin: round; }
.w-bold { stroke-width: 6; }

.tabs { display: flex; gap: 40px; align-items: center; margin: 84px 26px 36px 24px; }
.pill { width: 206px; height: 104px; padding-bottom: 2px; border: 2px solid #ccc; border-radius: 52px; color: #ccc; font-size: 40px; font-weight: 600; }
.pill.on { border: 0; background: #00adb5; color: #fff; font-size: 37px; font-weight: 700; }
.feedback { width: 322px; height: 100px; margin-left: auto; padding-bottom: 2px; border-radius: 20px; background: #000; color: #fff; font-size: 37px; font-weight: 700; }

.board { display: grid; grid-template-columns: 834px 1fr; gap: 24px; padding: 54px 60px 52px; border-radius: 40px; box-shadow: 0 0 20px rgba(0, 0, 0, .25); }
.days { contain: size; display: flex; flex-direction: column; gap: 30px; margin-top: -20px; padding: 24px 14px 0; overflow: auto; scrollbar-width: none; }
.day { flex: none; padding: 0 30px 30px; border-radius: 40px; background: #fff; box-shadow: 0 0 20px rgba(0, 0, 0, .25); }
.day:last-child { padding-bottom: 90px; }
.day header, .day ol { padding: 0 4px 0 2px; }
.day-open header, .day-open ol { padding: 0 0 0 7px; }
.day header { display: flex; align-items: center; height: 104px; padding-bottom: 10px; }
.day h2 { width: 151px; font-size: 40px; font-weight: 600; }
.day header p { flex: 1; color: #808080; font-size: 30px; }
.day header svg { width: 40px; height: 32px; margin-top: 10px; }
.day ol { display: grid; gap: 23px; }
.day li { display: flex; align-items: center; gap: 21px; }
.day b { width: 80px; border-radius: 20px; color: #fff; font-size: 48px; font-weight: 700; line-height: 80px; text-align: center; }
.pink b { background: #f49fa0; }
.mint b { background: #a8e8cf; }
.lilac b { background: #c4b1e1; }
.place { display: flex; flex: 1; align-items: center; height: 122px; padding: 0 38px 0 15px; border-radius: 20px; background: #f1f1f1; }
.place div { flex: 1; }
.place small { display: block; color: #808080; font-size: 18px; line-height: 28px; }
.place h3 { margin-top: 8px; font-size: 37px; line-height: 60px; }
.del svg { width: 40px; height: 40px; }
.drag { margin-left: 28px; }
.drag svg { width: 52px; height: 40px; }
.add { display: block; width: 100%; height: 74px; margin-top: 28px; padding-bottom: 2px; border-radius: 37px; background: #00adb5; color: #fff; font-weight: 700; }

.map { position: relative; aspect-ratio: 1734 / 1742; border-radius: 38px; overflow: hidden; }
.map > svg { width: 100%; height: 100%; }
.map-mode { position: absolute; top: 38px; right: 36px; }
.map path { vector-effect: non-scaling-stroke; }
.road { fill: none; stroke-linejoin: round; }
.y-edge { stroke: #f4d78e; stroke-width: 12px; }
.y-core { stroke: #fdecb0; stroke-width: 8px; }
.o-edge { stroke: #e5ad6c; stroke-width: 15px; }
.o-core { stroke: #f8cf96; stroke-width: 10px; }
.lanes { fill: none; stroke: #e6e5e3; stroke-width: 3px; }
.streams { fill: none; stroke: #a4d1f3; stroke-width: 3px; stroke-dasharray: 5 6; }
.river { fill: none; stroke: #a4d1f3; stroke-width: 8px; stroke-linejoin: round; }
.river .wide { stroke-width: 12px; }
.river .thin { stroke-width: 5px; }
.river .fill { fill: #a4d1f3; stroke: none; }
.woods { fill: #bfe0bd; opacity: .55; }
.map text { font-family: "Noto Sans CJK KR", sans-serif; font-weight: 700; text-anchor: middle; }
.t-area, .t-city, .t-green, .t-jct { paint-order: stroke; stroke: #fff; stroke-opacity: .8; stroke-width: 5px; stroke-linejoin: round; }
.t-area { fill: #9b9797; font-size: 41px; }
.t-gu { fill: #6d6b6b; font-size: 45px; }
.t-city { fill: #444; font-size: 51px; }
.t-green { fill: #6ba058; font-size: 34px; }
.t-slate { fill: #808caf; }
.t-blue { fill: #5d81ab; }
.t-jct { fill: #735c4c; font-size: 31px; }
.t-ic { fill: #84796f; font-size: 24px; }
.t-route { fill: #fff; font-size: 31px; }
.t-local { fill: #705733; font-size: 30px; }
.trail { fill: none; stroke-width: 6px; stroke-dasharray: 11 5; }
.map .t-pin text { font-family: Inter, sans-serif; font-size: 38px; font-weight: 700; }
```
